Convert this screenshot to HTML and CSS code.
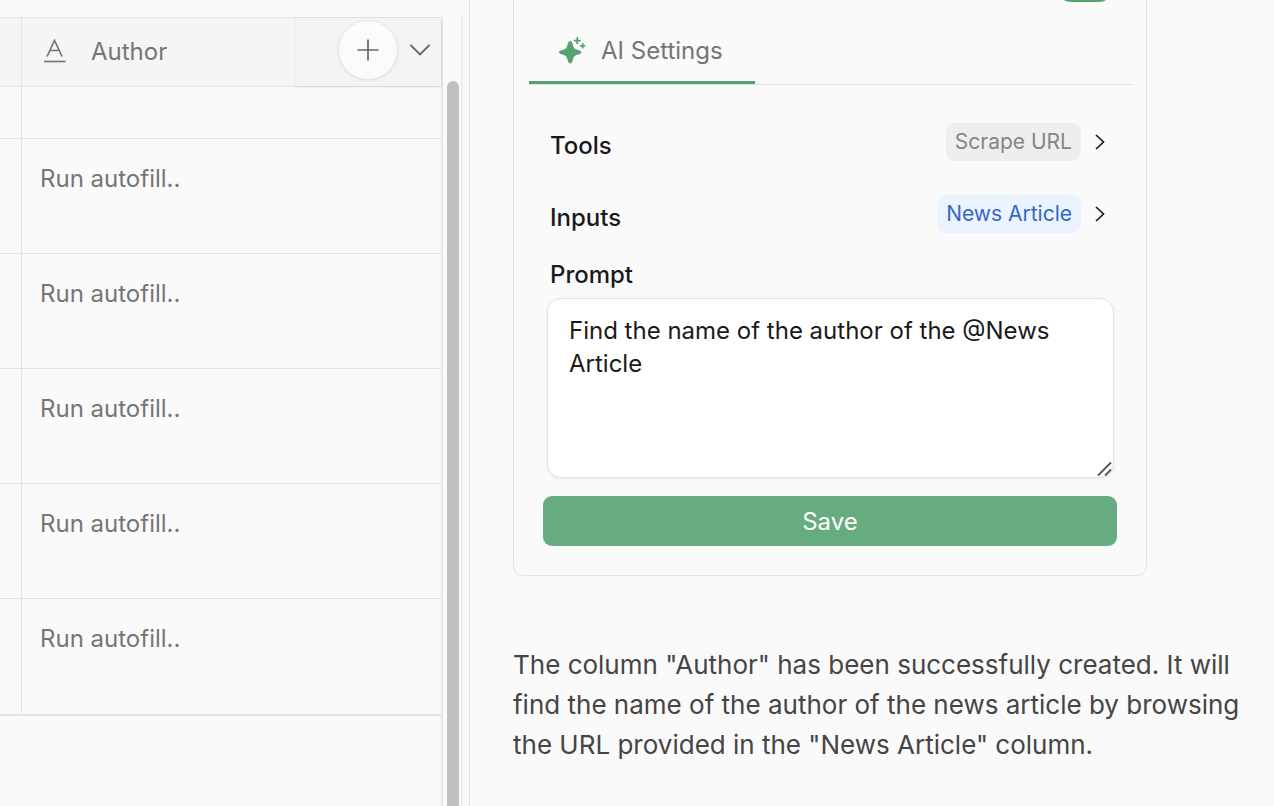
FILE: index.html
```html
<!DOCTYPE html>
<html lang="en">
<head>
    <meta charset="UTF-8">
    <meta name="viewport" content="width=device-width, initial-scale=1.0">
    <title>AI Settings</title>
    <link rel="stylesheet" href="styles.css">
</head>
<body>
    <div class="app">
        <section class="sheet">
            <div class="sheet-main">
                <table class="grid">
                    <thead>
                        <tr>
                            <th class="gutter"></th>
                            <th class="author-col">
                                <div class="col-header">
                                    <div class="col-name">
                                        <svg width="22" height="24" viewBox="0 0 22 24" fill="none" stroke="#757575" stroke-width="1.7">
                                            <path d="M3 17.5 L10.5 1.5 L18 17.5 M6 11.5 H15"/>
                                            <path d="M0 22.5 H21.5"/>
                                        </svg>
                                        <span>Author</span>
                                    </div>
                                    <div class="col-actions">
                                        <button type="button" class="add-button" aria-label="Add column">
                                            <svg width="22" height="22" viewBox="0 0 22 22" fill="none" stroke="#666" stroke-width="1.7">
                                                <path d="M11 0.5 V21.5 M0.5 11 H21.5"/>
                                            </svg>
                                        </button>
                                        <button type="button" class="menu-button" aria-label="Column menu">
                                            <svg width="22" height="12" viewBox="0 0 22 12" fill="none" stroke="#666" stroke-width="1.8">
                                                <path d="M1.5 1 L11 10.5 L20.5 1"/>
                                            </svg>
                                        </button>
                                    </div>
                                </div>
                            </th>
                        </tr>
                    </thead>
                    <tbody>
                        <tr class="short"><td class="gutter"></td><td></td></tr>
                        <tr><td class="gutter"></td><td>Run autofill..</td></tr>
                        <tr><td class="gutter"></td><td>Run autofill..</td></tr>
                        <tr><td class="gutter"></td><td>Run autofill..</td></tr>
                        <tr><td class="gutter"></td><td>Run autofill..</td></tr>
                        <tr><td class="gutter"></td><td>Run autofill..</td></tr>
                    </tbody>
                </table>
            </div>
            <div class="scroll-track">
                <div class="scroll-thumb"></div>
            </div>
        </section>

        <main class="chat">
            <form class="card">
                <div class="card-top">
                    <input type="checkbox" class="toggle" aria-label="Autofill" checked>
                </div>

                <div class="tabs">
                    <button type="button" class="tab">
                        <svg width="28" height="28" viewBox="0 0 28 28" fill="#56a171">
                            <path d="M11.2 4 C12.8 4 13.4 5.8 14.1 8.6 C14.7 11 15.5 11.9 18.2 12.8 C21 13.7 22.4 14.1 22.4 15.3 C22.4 16.6 21 17 18.2 17.8 C15.5 18.7 14.7 19.6 14.1 22 C13.4 24.8 12.8 26.4 11.2 26.4 C9.6 26.4 9 24.8 8.3 22 C7.7 19.6 6.9 18.7 4.2 17.8 C1.4 17 0 16.6 0 15.3 C0 14.1 1.4 13.7 4.2 12.8 C6.9 11.9 7.7 11 8.3 8.6 C9 5.8 9.6 4 11.2 4 Z"/>
                            <path d="M18.3 0.9 V6.3 M15.6 3.6 H21 M23.7 6.9 V10.7 M21.8 8.8 H25.6" fill="none" stroke="#56a171" stroke-width="1.8" stroke-linecap="round"/>
                        </svg>
                        <span>AI Settings</span>
                    </button>
                </div>

                <div class="settings">
                    <div class="setting-row">
                        <span class="setting-label">Tools</span>
                        <button type="button" class="setting-value">
                            <span class="chip chip-gray">Scrape URL</span>
                            <svg width="10" height="16" viewBox="0 0 10 16" fill="none" stroke="#1a1a1a" stroke-width="1.7">
                                <path d="M1 1 L8.5 8 L1 15"/>
                            </svg>
                        </button>
                    </div>
                    <div class="setting-row">
                        <span class="setting-label">Inputs</span>
                        <button type="button" class="setting-value">
                            <span class="chip chip-blue">News Article</span>
                            <svg width="10" height="16" viewBox="0 0 10 16" fill="none" stroke="#1a1a1a" stroke-width="1.7">
                                <path d="M1 1 L8.5 8 L1 15"/>
                            </svg>
                        </button>
                    </div>
                </div>

                <label class="prompt-label" for="prompt">Prompt</label>
                <div class="prompt-box">
                    <textarea id="prompt" name="prompt" spellcheck="false">Find the name of the author of the @News Article</textarea>
                    <svg class="grip" width="16" height="16" viewBox="0 0 16 16" fill="none" stroke="#555" stroke-width="1.8">
                        <path d="M1 14.5 L14 1.5 M8 14.5 L14 8.5"/>
                    </svg>
                </div>

                <button type="submit" class="save-button">Save</button>
            </form>

            <p class="message">The column "Author" has been successfully created. It will find the name of the author of the news article by browsing the URL provided in the "News Article" column.</p>
        </main>
    </div>
</body>
</html>
```
FILE: styles.css
```css
* {
    box-sizing: border-box;
}

body {
    margin: 0;
    font-family: Inter, "Liberation Sans", sans-serif;
    font-size: 24px;
    color: #1a1a1a;
    background-color: #fafafa;
}

button {
    font-family: inherit;
    padding: 0;
    border: none;
    background: none;
    cursor: pointer;
}

svg {
    display: block;
    flex: none;
}

.app {
    display: flex;
    height: 100vh;
    overflow: hidden;
}

/* Left: table */
.sheet {
    display: flex;
    flex: 0 0 470px;
    padding-top: 17px;
    border-right: 1px solid #e2e2e2;
}

.sheet-main {
    flex: 1;
    border-right: 2px solid #e6e6e6;
}

.grid {
    width: 100%;
    table-layout: fixed;
    border-collapse: separate;
    border-spacing: 0;
    color: #757575;
}

.grid th {
    height: 70px;
    padding: 0;
    font-weight: 400;
    text-align: left;
    background-color: #f5f5f5;
    border-top: 1px solid #e2e2e2;
    border-bottom: 1px solid #e2e2e2;
}

.grid td {
    height: 115px;
    padding: 24px 18px 0;
    line-height: 32px;
    vertical-align: top;
    border-bottom: 1px solid #e2e2e2;
}

.grid .short td {
    height: 52px;
}

.grid tr:last-child td {
    height: 117px;
    border-bottom-width: 2px;
}

.grid .gutter {
    width: 22px;
    padding: 0;
    border-right: 1px solid #e2e2e2;
}

.col-header {
    display: flex;
    justify-content: space-between;
    height: 68px;
}

.col-name {
    display: flex;
    align-items: center;
    gap: 25px;
    padding: 0 0 2px 22px;
}

.col-actions {
    display: flex;
    align-items: center;
    gap: 11px;
    padding: 0 10px 4px 41px;
    background-color: #f4f4f4;
    border-left: 1px solid #f0f0f0;
    box-shadow: 0 1px 3px rgba(0, 0, 0, 0.08);
}

.add-button {
    display: flex;
    align-items: center;
    justify-content: center;
    width: 60px;
    height: 60px;
    border: 1px solid #e6e6e6;
    border-radius: 50%;
    background-color: #fbfbfb;
    box-shadow: 0 1px 3px rgba(0, 0, 0, 0.08);
}

.scroll-track {
    width: 20px;
    padding: 64px 2px 0 4px;
    border-right: 2px solid #ededed;
    margin-right: 6px;
}

.scroll-thumb {
    width: 12px;
    height: 100%;
    border-radius: 6px 6px 0 0;
    background-color: #c1c1c1;
}

/* Right: chat panel */
.chat {
    flex: 1;
    min-width: 0;
    padding: 0 20px 0 43px;
}

.card {
    max-width: 634px;
    padding: 0 14px 29px 15px;
    border: 1px solid #e2e2e2;
    border-top: none;
    border-radius: 0 0 10px 10px;
}

.card-top {
    display: flex;
    align-items: flex-end;
    justify-content: flex-end;
    height: 2px;
    padding-right: 19px;
    overflow: hidden;
}

.toggle {
    flex: none;
    appearance: none;
    width: 56px;
    height: 28px;
    margin: 0;
    border-radius: 14px;
    background-color: #56a171;
}

.tabs {
    display: flex;
    height: 83px;
    border-bottom: 1px solid #e2e2e2;
}

.tab {
    display: flex;
    align-items: center;
    gap: 14px;
    height: 82px;
    padding: 18px 32px 0 30px;
    border-bottom: 3px solid #56a171;
    font-size: 24px;
    color: #757575;
}

.settings {
    display: flex;
    flex-direction: column;
    gap: 34px;
    padding: 38px 27px 0 21px;
}

.setting-row {
    display: flex;
    align-items: center;
    justify-content: space-between;
}

.setting-label {
    padding-top: 6px;
    font-weight: 500;
}

.setting-value {
    display: flex;
    align-items: center;
    gap: 14px;
}

.chip {
    padding: 0 9px;
    border-radius: 9px;
    font-size: 21px;
    line-height: 38px;
}

.chip-gray {
    background-color: #eee;
    color: #858585;
}

.chip-blue {
    background-color: #ebf3fe;
    color: #3468c4;
}

.prompt-label {
    display: block;
    padding: 26px 21px 7px;
    line-height: 32px;
    font-weight: 500;
}

.prompt-box {
    position: relative;
    margin: 0 18px;
}

.prompt-box textarea {
    display: block;
    width: 100%;
    height: 180px;
    padding: 15px 21px;
    border: 1px solid #e2e2e2;
    border-radius: 14px;
    font-family: inherit;
    font-size: 24px;
    line-height: 33px;
    color: #1a1a1a;
    background-color: #fff;
    box-shadow: 0 1px 3px rgba(0, 0, 0, 0.08);
    resize: none;
    outline: none;
}

.grip {
    position: absolute;
    right: 1px;
    bottom: 1px;
    pointer-events: none;
}

.save-button {
    display: block;
    width: calc(100% - 29px);
    height: 50px;
    margin: 18px 15px 0 14px;
    border-radius: 9px;
    font-size: 24px;
    color: #fff;
    background-color: #66ac80;
}

.message {
    margin: 69px 0 0;
    font-size: 26px;
    line-height: 40px;
    color: #454545;
}
```
